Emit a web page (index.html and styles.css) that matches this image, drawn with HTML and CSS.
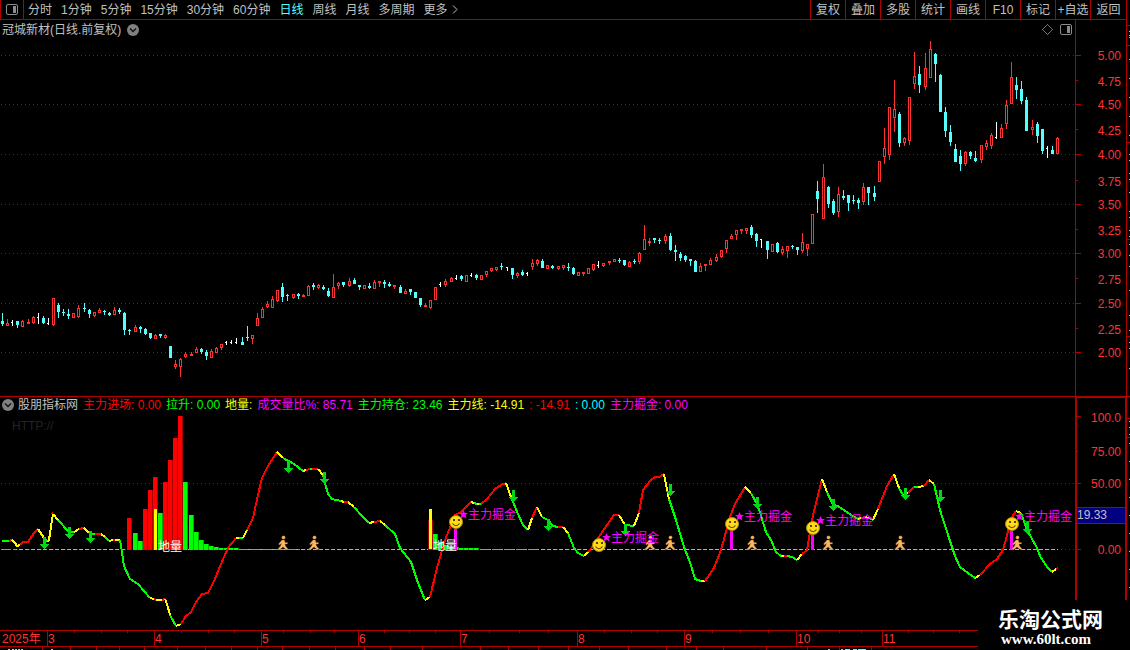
FILE: index.html
```html
<!DOCTYPE html>
<html lang="zh-CN">
<head>
<meta charset="utf-8">
<title>冠城新材 日线</title>
<link rel="stylesheet" href="styles.css">
</head>
<body>
<header class="toolbar">
  <button class="layout-btn" aria-label="布局">
    <svg width="12" height="12" viewBox="0 0 12 12"><rect x="0.5" y="0.5" width="11" height="10" rx="1.5" fill="none" stroke="#8c8c8c"/><rect x="7" y="2" width="3" height="7" fill="#8c8c8c"/></svg>
  </button>
  <nav class="periods">
    <button>分时</button><button>1分钟</button><button>5分钟</button><button>15分钟</button><button>30分钟</button><button>60分钟</button><button class="active">日线</button><button>周线</button><button>月线</button><button>多周期</button><button class="more">更多<svg width="6" height="9" viewBox="0 0 6 9"><path d="M1 0.5L5 4.5L1 8.5" fill="none" stroke="#c0c0c0"/></svg></button>
  </nav>
  <div class="tools">
    <button>复权</button><button>叠加</button><button>多股</button><button>统计</button><button>画线</button><button>F10</button><button>标记</button><button>+自选</button><button>返回</button>
  </div>
</header>
<main>
  <section class="panel">
    <div class="caption">
      <span>冠城新材(日线.前复权)</span>
      <button class="fold" aria-label="展开"><svg width="12" height="12" viewBox="0 0 12 12"><circle cx="6" cy="6" r="6" fill="#808080"/><path d="M3 4.5L6 7.5L9 4.5" fill="none" stroke="#111" stroke-width="1.4"/></svg></button>
    </div>
    <svg class="plot" id="price" viewBox="0 20 1130 376"></svg>
  </section>
  <section class="panel">
    <div class="legend">
      <div class="source">
        <button class="fold" aria-label="展开"><svg width="12" height="12" viewBox="0 0 12 12"><circle cx="6" cy="6" r="6" fill="#808080"/><path d="M3 4.5L6 7.5L9 4.5" fill="none" stroke="#111" stroke-width="1.4"/></svg></button>
        <span>股朋指标网</span>
      </div>
      <span class="red">主力进场: 0.00</span>
      <span class="green">拉升: 0.00</span>
      <span class="yellow">地量:</span>
      <span class="magenta">成交量比%: 85.71</span>
      <span class="green">主力持仓: 23.46</span>
      <span class="yellow">主力线: -14.91</span>
      <span class="red">: -14.91</span>
      <span class="cyan">: 0.00</span>
      <span class="magenta">主力掘金: 0.00</span>
    </div>
    <svg class="plot" id="indicator" viewBox="0 396 1130 254"></svg>
  </section>
</main>
<script src="chart.js"></script>
</body>
</html>
```
FILE: styles.css
```css
* { box-sizing: border-box; }
body {
  margin: 0;
  background: #000;
  color: #c0c0c0;
  font: 12px/14px "Liberation Sans", "Noto Sans CJK SC", sans-serif;
  overflow: hidden;
}
button {
  padding: 0;
  border: 0;
  background: none;
  color: inherit;
  font: inherit;
  white-space: nowrap;
  cursor: pointer;
}
.toolbar {
  display: flex;
  height: 20px;
  padding-right: 3px;
}
.toolbar > * { border-bottom: 1px solid #b00000; }
.layout-btn {
  display: flex;
  align-items: center;
  justify-content: center;
  width: 24px;
  border-left: 1px solid #b00000;
  border-right: 1px solid #b00000;
}
.periods {
  display: flex;
  flex: 1;
  align-items: center;
  gap: 9px;
  padding-left: 4px;
}
.periods .active { color: #54ffff; }
.more { display: flex; align-items: center; gap: 4px; }
.tools { display: flex; border-right: 1px solid #b00000; }
.tools button { width: 35px; border-left: 1px solid #b00000; }
.tools button:last-child { width: 36px; }
.panel { position: relative; }
.plot { display: block; width: 100%; height: auto; }
.caption, .legend {
  position: absolute;
  top: 2px;
  left: 2px;
  display: flex;
  align-items: center;
  gap: 5px;
  white-space: nowrap;
}
.caption { top: 3px; gap: 6px; }
.source { display: flex; align-items: center; gap: 4px; }
.fold { display: flex; }
.red { color: #ff0000; }
.green { color: #00ff00; }
.yellow { color: #ffff00; }
.magenta { color: #ff00ff; }
.cyan { color: #00ffff; }

.plot text { font-size: 12px; }
.crisp { shape-rendering: crispEdges; }
.axis { stroke: #b00000; fill: none; }
.axis-label { fill: #ff3232; text-anchor: end; }
.month { fill: #ff3232; }
.dots { stroke: #b00000; stroke-dasharray: 1 3; }
.signal { fill: #ff00ff; }
.low-volume { fill: #ffffff; }
.site { fill: #242424; }
.cursor-value { fill: #c0c0c0; }
.plot .brand { fill: #fff; font-size: 21px; font-weight: 700; }
.plot .url { fill: #fff; font: 700 15px "Liberation Serif", serif; }
```
FILE: chart.js
```
const NS = 'http://www.w3.org/2000/svg';
const RED = '#b00000';

function add(parent, tag, attrs, text) {
  const el = document.createElementNS(NS, tag);
  for (const k in attrs) el.setAttribute(k, attrs[k]);
  if (text !== undefined) el.textContent = text;
  parent.appendChild(el);
  return el;
}
const box = (p, x, y, w, h, fill) => add(p, 'rect', { x, y, width: w, height: h, fill });
const hline = (p, x1, x2, y, cls) => add(p, 'path', { d: `M${x1} ${y + 0.5}H${x2}`, class: cls || 'axis' });

/* Daily candles: colour, high, body top, body bottom, low */
const candles = `c 313 321 324 326;r 319 323 326 326;w 320 322 323 326;c 321 321 325 328;r 320 321 327 327;r 319 322 324 324;r 316 317 323 324;w 313 317 318 324;c 316 318 323 324;w 318 323 324 325;r 298 298 325 326;c 303 305 312 318;c 309 312 313 316;c 309 314 316 319;r 313 313 318 318;r 305 308 317 318;c 303 308 309 312;c 309 310 314 318;r 312 312 316 317;r 308 310 313 313;c 310 311 312 315;c 312 313 315 316;r 307 310 315 315;c 308 310 312 314;c 312 313 330 335;c 329 330 331 335;r 325 327 332 332;c 326 327 329 333;c 328 329 334 335;c 333 333 338 339;r 334 335 339 339;c 334 334 336 338;r 334 335 338 339;c 346 346 358 358;r 360 364 367 369;r 358 359 367 377;r 352 354 357 358;r 352 354 356 356;r 347 349 353 353;c 348 349 352 354;c 350 352 356 360;r 349 351 358 358;r 347 348 353 353;r 344 344 348 350;w 341 342 343 345;w 340 342 343 344;w 338 342 343 344;c 337 342 345 345;c 326 337 338 341;r 335 335 339 344;r 313 318 326 326;r 307 309 318 318;r 301 304 307 308;r 296 299 308 308;r 290 290 301 302;c 283 287 297 302;c 294 295 296 301;r 294 294 298 299;c 293 294 296 299;r 294 295 297 297;r 285 286 296 296;c 283 285 287 290;r 284 285 288 289;c 285 287 289 290;c 288 291 296 297;r 274 287 298 298;r 282 283 286 289;c 282 282 285 287;r 278 281 286 287;c 278 280 284 284;c 285 285 287 290;r 285 285 289 289;c 283 286 288 289;r 280 282 289 289;r 281 281 283 287;c 280 282 284 288;c 282 284 286 287;r 285 285 287 289;c 285 287 293 293;r 289 291 294 294;c 289 289 292 295;c 292 292 298 298;c 298 298 305 307;r 303 305 307 307;r 300 300 308 309;r 287 287 300 300;w 282 284 285 287;r 279 281 285 287;r 277 278 282 282;w 275 278 279 280;c 275 276 279 281;r 275 275 282 282;w 273 275 276 277;c 274 275 278 280;r 275 275 280 280;r 271 271 275 277;r 268 268 271 272;r 267 267 270 271;c 263 266 267 270;w 267 267 268 271;c 268 268 275 279;r 272 273 276 278;c 270 272 275 276;w 272 273 274 276;r 259 263 267 270;r 259 260 264 266;c 259 261 268 268;r 265 265 269 269;c 265 266 268 269;r 266 266 269 270;r 265 265 268 270;c 263 267 268 271;c 267 268 274 275;r 272 272 276 276;r 272 272 274 276;r 268 268 274 274;r 264 264 270 271;w 261 265 266 268;r 263 263 266 267;r 261 261 263 265;r 259 259 262 262;c 258 260 261 263;c 260 260 265 266;r 261 262 267 267;c 259 261 262 264;r 252 253 262 264;r 225 239 250 250;r 238 241 243 246;c 238 238 240 243;c 238 240 241 244;r 234 236 241 244;c 233 236 250 251;c 245 250 252 261;c 252 254 258 261;c 255 256 260 262;c 259 259 261 266;c 260 261 272 272;r 263 266 272 272;r 264 264 266 271;r 258 260 265 265;r 254 257 261 262;r 250 250 257 258;r 240 240 249 253;r 234 236 239 239;r 230 230 235 240;r 229 229 231 234;r 228 228 231 234;c 225 227 235 238;c 233 234 241 247;w 239 239 240 248;c 241 241 250 259;r 244 244 252 252;c 242 243 252 253;r 246 249 253 255;r 246 246 251 258;c 245 246 247 249;c 247 247 250 255;r 233 242 251 253;r 244 244 249 256;r 214 214 244 244;c 181 191 199 213;r 164 177 219 219;c 186 187 204 208;c 199 201 213 215;r 187 194 212 217;c 190 196 198 200;c 195 195 203 211;c 195 200 201 204;c 198 200 203 209;r 183 187 202 205;c 187 187 193 205;c 186 193 197 201;r 161 161 182 182;r 128 148 157 164;r 107 107 155 160;r 80 109 118 132;c 112 114 143 147;r 137 138 143 146;r 97 97 141 145;r 52 76 84 89;c 66 74 85 93;r 53 68 87 90;r 41 49 78 78;c 53 54 64 82;c 74 75 112 112;c 107 112 131 137;c 125 132 142 146;c 144 149 162 162;c 150 156 164 171;r 151 152 164 166;c 151 152 156 159;c 151 158 161 162;r 145 145 160 163;r 140 143 147 150;r 133 135 146 149;w 122 137 138 139;r 124 128 138 138;r 100 105 124 129;r 62 77 104 104;c 77 85 90 99;c 81 89 101 104;c 97 100 131 131;r 120 127 130 135;c 122 124 136 143;c 129 129 151 154;w 146 148 149 158;c 146 150 154 154;r 137 138 154 154`;

/* Price panel */
const price = document.getElementById('price');
const pg = add(price, 'g', { class: 'crisp' });
const levels = [[55, '5.00'], [81, '4.75'], [104, '4.50'], [130, '4.25'], [154, '4.00'], [181, '3.75'], [204, '3.50'], [230, '3.25'], [253, '3.00'], [279, '2.75'], [303, '2.50'], [329, '2.25'], [352, '2.00']];
levels.forEach(([y, label], i) => {
  if (i % 2 === 0) {
    hline(pg, 1, 1075, y, 'dots');
    hline(pg, 1076, 1081, y);
  } else {
    hline(pg, 1076, 1078, y - 1);
  }
  add(price, 'text', { x: 1121, y: y + 5, class: 'axis-label' }, label);
});
add(pg, 'path', { d: 'M1075.5 20V396M1126.5 20V396', class: 'axis' });

candles.split(';').forEach((row, i) => {
  const [c, ...n] = row.split(' ');
  const [hi, top, bot, lo] = n.map(Number);
  const x = Math.floor(2.52 + 5.0966 * i);
  if (c === 'w') {
    box(pg, x, hi, 1, lo - hi, '#fff');
    box(pg, x - 1, top, 2, 1, '#fff');
    return;
  }
  const color = c === 'c' ? '#54ffff' : '#ff3232';
  if (top > hi) box(pg, x, hi, 1, top - hi, color);
  if (lo > bot) box(pg, x, bot, 1, lo - bot, color);
  if (c === 'c' || bot - top < 3) {
    box(pg, x - 1, top, 3, bot - top, color);
  } else {
    add(pg, 'rect', { x: x - 0.5, y: top + 0.5, width: 2, height: bot - top - 1, fill: 'none', stroke: color });
  }
});

add(pg, 'path', { d: 'M1047.5 24.5L1052.5 29.5L1047.5 34.5L1042.5 29.5Z', fill: 'none', stroke: '#707070' });
add(price, 'rect', { x: 1060.5, y: 24.5, width: 11, height: 10, rx: 1.5, fill: 'none', stroke: '#8c8c8c' });
box(pg, 1067, 26, 3, 7, '#8c8c8c');

/* Neighbouring pane seen at the right edge */
[25, 45, 142, 239, 336].forEach(y => hline(pg, 1127, 1130, y));
[31, 35, 37, 59, 78, 97, 116, 135, 154, 160, 173, 179, 192, 211, 217, 230, 236, 244, 255, 266, 290, 315, 330, 342, 348, 368].forEach(y => box(pg, 1129, y, 1, 1, '#c0c0c0'));

/* Indicator panel */
const ind = document.getElementById('indicator');
const g = add(ind, 'g', { class: 'crisp' });
hline(g, 0, 1130, 396);
hline(g, 1, 1075, 483, 'dots');
box(g, 1075, 397, 2, 203, RED);
box(g, 1125, 397, 2, 203, RED);
box(g, 1075, 397, 52, 1, RED);
[[417, '100.0'], [451, '75.00'], [483, '50.00'], [549, '0.00']].forEach(([y, label]) => {
  hline(g, 1077, y === 451 ? 1078 : 1081, y === 417 ? 416 : y);
  add(ind, 'text', { x: 1121, y: y + 5, class: 'axis-label' }, label);
});
box(g, 1077, 508, 48, 15, '#000080');
hline(g, 1077, 1125, 507);
hline(g, 1077, 1125, 523);
add(ind, 'text', { x: 1077, y: 519, class: 'cursor-value' }, '19.33');
add(ind, 'text', { x: 12, y: 430, class: 'site' }, 'HTTP://');
[418, 437].forEach(y => hline(g, 1127, 1130, y));
[421, 427, 434, 443, 461, 479, 497, 515, 533, 551, 569, 587].forEach(y => box(g, 1129, y, 1, 1, '#c0c0c0'));

/* Zero line */
hline(g, 1, 1075, 549, 'dots');
add(g, 'path', { d: 'M1 549.5H1058', stroke: '#00ffff', 'stroke-dasharray': '4 2' });
add(g, 'path', { d: 'M1 549.5H16M238 549.5H300M480 549.5H540', stroke: '#00ff00', 'stroke-dasharray': '10 2' });

/* Volume bars: x, top, colour */
const R = ['#ff0000', '#a80000'], G = ['#00ff00', '#00a800'];
[[127, 518, R], [133, 533, G], [138, 541, G], [143, 509, R], [148, 490, R], [153, 477, R], [158, 513, G], [163, 482, R], [168, 460, R], [173, 438, R], [178, 416, R],
 [183, 482, G], [189, 515, G], [194, 532, G], [199, 540, G], [204, 544, G], [209, 546, G], [214, 547, G], [219, 548, G], [224, 548, G], [229, 548, G], [234, 548, G],
 [428, 520, R], [433, 534, G], [439, 542, G], [444, 545, G], [449, 547, G], [454, 547, G], [459, 548, G], [464, 548, G], [469, 548, G], [474, 548, G]
].forEach(([x, y, [light, dark]]) => {
  box(g, x, y, 5, 550 - y, dark);
  box(g, x, y, 4, 550 - y, light);
});
box(g, 154, 509, 3, 41, '#ffff00');
box(g, 428, 520, 5, 30, '#a80000');
box(g, 429, 509, 3, 40, '#ffff00');
[[454, 529], [730, 531], [811, 535], [1010, 531]].forEach(([x, y]) => box(g, x, y, 3, 550 - y, '#ff00ff'));

/* Main force line: each run starts where the previous one ends */
const runs = `g 2,541 9,541;r 12,540;y 15,543 17,546 20,545;r 23,542 28,542 34,533 38,529;y 44,538;g 48,542;y 49,540 52,520 53,514;r 52,513 53,514;y 58,520;g 68,531 74,532;y 79,529;r 84,528;y 89,533;g 95,534;r 101,534;y 105,537;g 109,541;y 113,540;r 115,540;y 120,540;g 122,552 124,566 130,579 138,584 144,591 150,598;y 154,599;r 156,600;y 162,600;r 165,599;y 167,604 170,615;g 176,626;y 181,624;r 186,616 191,612 196,602 202,594 208,593 214,581 221,564 228,548 236,538;y 239,538;g 243,538;y 247,530;r 253,518 258,495 262,478 268,466 277,452;y 283,458;g 294,464 303,471;y 306,470;r 310,469;g 312,469;r 318,469;y 323,475;g 325,483 328,494 332,499 341,501;y 344,502;r 348,502;y 354,507;g 363,517 369,523;y 374,522;r 380,521;y 385,525;g 395,534 400,548 411,562 418,583 425,600;y 430,597;r 437,568 445,540 455,515 461,512 471,502;y 474,503;g 477,504;y 479,504;g 481,504;r 487,499 495,489 501,485 506,483;y 511,497;g 518,514 523,525 528,530;y 532,518;r 537,507;y 542,517;g 548,520 553,526 558,527;r 563,527;y 568,533;g 574,548 578,553 584,556;y 588,552;r 594,545 600,535 607,525 614,515 619,515;y 625,525;g 634,526;y 639,513;r 643,490 650,481 655,477 659,477 664,474;y 669,499;g 676,520 685,550 690,562 695,579 701,581;y 705,581;r 714,568 721,550 730,517 735,504 745,487;y 751,493;g 758,506 766,532 771,540 776,552 781,556;y 784,556;r 787,556;g 792,557 797,560;y 802,554;r 807,550 813,515 822,479;y 827,492;g 833,505 838,506 848,513 858,519;y 861,518;r 865,517;y 869,518;g 873,520;y 878,509;r 887,486 894,474;y 899,488;g 903,495;y 908,493;r 914,487;g 918,487;y 924,486;r 929,480;y 934,484;g 940,510 950,541 955,556 960,567 968,573 975,578;y 980,575;r 990,564 997,559 1003,550 1010,524 1012,517 1016,511;y 1021,513;g 1027,530 1036,546 1041,558 1048,568 1052,572;y 1056,569;r 1058,568`;
const tone = { r: '#ff0000', g: '#00ff00', y: '#ffff00' };
let last = '';
runs.split(';').forEach(run => {
  const points = run.slice(2);
  add(g, 'polyline', { points: `${last} ${points}`.trim(), fill: 'none', stroke: tone[run[0]], 'stroke-width': 2 });
  last = points.split(' ').pop();
});

/* Down arrows: centre x, tip y */
[[44, 549], [69, 539], [90, 543], [288, 473], [324, 484], [513, 502], [548, 531], [625, 536], [670, 496], [757, 509], [833, 511], [905, 500], [940, 502], [1027, 534]].forEach(([x, y]) => {
  add(g, 'path', { d: `M${x - 1} ${y - 12}h3v7h3l-4 5h-1l-5 -5h4z`, fill: '#00d818' });
});

/* Walking figures */
[283, 314, 650, 670, 752, 828, 900, 1017].forEach(x => {
  const p = add(ind, 'g', { transform: `translate(${x} 536)`, fill: '#f8b860', stroke: '#8a4a20', 'stroke-width': 0.3 });
  add(p, 'circle', { cx: 0.5, cy: 1.5, r: 1.8 });
  add(p, 'path', { d: 'M-1 4L1.5 4L2 6.5L4.5 6.5V8L2 8L2.5 10L5.5 13.5H3L0 11L-3 13.5H-5.5L-2.5 10L-1.5 7.5L-3.5 9L-4.5 8Z' });
});

/* Buy signals: face centre, then star and label beside it */
[[456, 522, 463, 514], [599, 545, 606, 537], [732, 524, 739, 516], [813, 528, 820, 520], [1012, 524, 1019, 516]].forEach(([x, y, sx, sy]) => {
  add(ind, 'circle', { cx: x, cy: y, r: 6.5, fill: '#ffdc18', stroke: '#b08a10' });
  box(ind, x - 3, y - 3, 2, 2, '#604000');
  box(ind, x + 2, y - 3, 2, 2, '#604000');
  add(ind, 'path', { d: `M${x - 3.5} ${y + 1.5}Q${x} ${y + 6} ${x + 3.5} ${y + 1.5}`, fill: 'none', stroke: '#604000', 'stroke-width': 1.2 });
  add(ind, 'path', { d: `M${sx + 0.5} ${sy - 4}l1.3 2.9h3.2l-2.5 2.2l1 3.4l-3 -2l-3 2l1 -3.4l-2.5 -2.2h3.2z`, class: 'signal' });
  add(ind, 'text', { x: sx + 5, y: sy + 5, class: 'signal' }, '主力掘金');
});
add(ind, 'text', { x: 158, y: 551, class: 'low-volume' }, '地量');
add(ind, 'text', { x: 433, y: 550, class: 'low-volume' }, '地量');

/* Date axis */
hline(g, 0, 978, 630);
hline(g, 0, 978, 646);
add(ind, 'text', { x: 2, y: 643, class: 'month' }, '2025年');
[[47, 3], [154, 4], [261, 5], [358, 6], [460, 7], [577, 8], [684, 9], [796, 10], [882, 11]].forEach(([x, m]) => {
  box(g, x, 631, 1, 15, RED);
  add(ind, 'text', { x: x + 1, y: 643, class: 'month' }, m);
});
[74, 101, 127, 181, 208, 234, 283, 310, 334, 384, 409, 435, 489, 519, 548, 604, 631, 657, 712, 740, 768, 818, 839, 861, 908, 933, 959].forEach(x => box(g, x, 631, 1, 2, RED));
[42, 70, 96, 119, 144, 177, 205, 231, 257, 282, 309, 335, 364, 390, 422, 480, 508, 538, 568, 599, 628, 666, 696, 723, 766, 807, 839, 871].forEach(x => box(g, x, 647, 1, 3, RED));
[8, 12, 15, 18, 21, 51, 828, 841].forEach(x => box(g, x, 649, 2, 1, '#c0c0c0'));
[[845, 5], [853, 4], [858, 8]].forEach(([x, w]) => box(g, x, 649, w, 1, '#54ffff'));

add(ind, 'text', { x: 998, y: 627, class: 'brand' }, '乐淘公式网');
add(ind, 'text', { x: 1001, y: 644, class: 'url' }, 'www.60lt.com');
```
